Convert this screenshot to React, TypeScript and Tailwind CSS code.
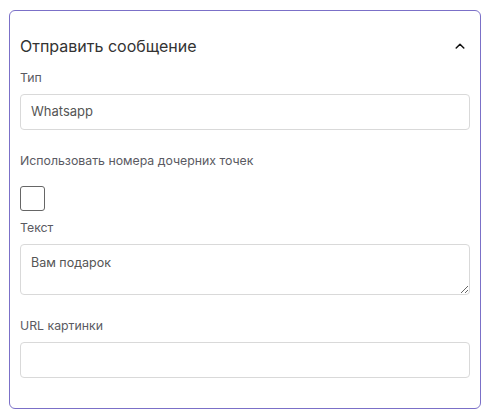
import React from "react";

export default function App() {
  return (
    <div className="w-[490px] h-[419px] bg-white pt-[10px] pl-[9px]" style={{ fontFamily: "Inter, 'Noto Sans', sans-serif" }}>
      <div className="w-[472px] h-[399px] border border-[#7b70c8] rounded-[6px] px-[10px] pt-[23px]">
        <div className="flex items-center justify-between h-[24px]">
          <span className="text-[16px] text-[#333333] leading-[24px]">Отправить сообщение</span>
          <svg width="14" height="14" viewBox="0 0 24 24" className="mr-[3px]" fill="none" stroke="#111" strokeWidth="2.6" strokeLinecap="round" strokeLinejoin="round">
            <path d="M5.5 15.5l6.5-6.5 6.5 6.5" />
          </svg>
        </div>
        <div className="mt-[12px] text-[12.3px] leading-[16px] text-[#5a5a62]">Тип</div>
        <div className="mt-[8px] h-[36px] border border-[#d9d9d9] rounded-[4px] flex items-center px-[10px] text-[13px] text-[#555]">Whatsapp</div>
        <div className="mt-[23px] text-[12.3px] leading-[16px] text-[#5a5a62]">Использовать номера дочерних точек</div>
        <div className="mt-[17px] w-[25px] h-[25px] border border-[#666] rounded-[3px]"></div>
        <div className="mt-[9px] text-[12.3px] leading-[16px] text-[#5a5a62]">Текст</div>
        <textarea
          defaultValue="Вам подарок"
          className="mt-[8px] block w-full h-[51px] border border-[#d9d9d9] rounded-[4px] px-[10px] pt-[9px] text-[12.5px] leading-[18px] text-[#555] outline-none"
          style={{ fontFamily: "Inter, 'Noto Sans', sans-serif" }}
        />
        <div className="mt-[23px] text-[12.3px] leading-[16px] text-[#5a5a62]">URL картинки</div>
        <div className="mt-[8px] h-[36px] border border-[#d9d9d9] rounded-[4px]"></div>
      </div>
    </div>
  );
}
